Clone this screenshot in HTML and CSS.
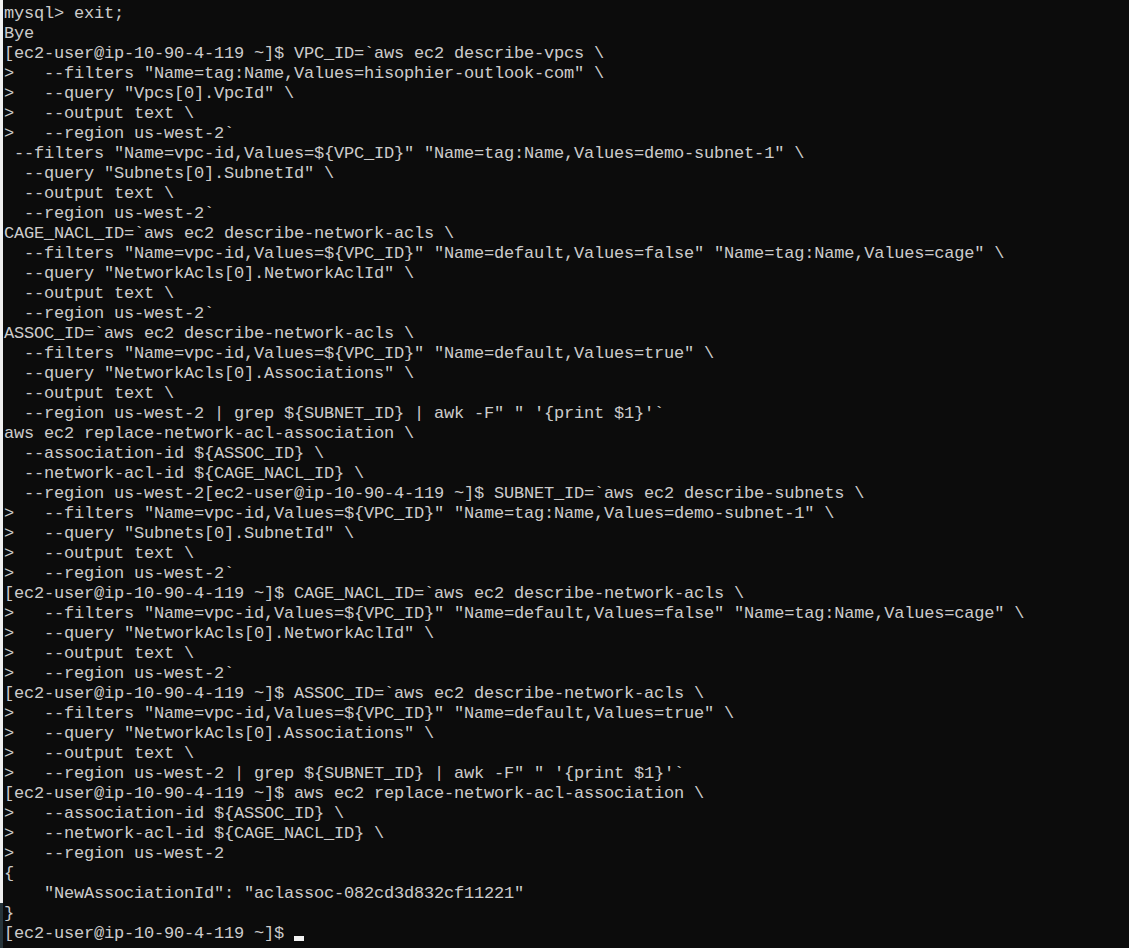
FILE: index.html
```html
<!DOCTYPE html>
<html>
<head>
<meta charset="utf-8">
<title>Terminal</title>
<link rel="stylesheet" href="styles.css">
</head>
<body>
<div class="window">
  <div class="edge"><div class="edge-top"></div><div class="edge-bottom"></div></div>
<pre class="term">mysql&gt; exit;
Bye
[ec2-user@ip-10-90-4-119 ~]$ VPC_ID=`aws ec2 describe-vpcs \
&gt;   --filters "Name=tag:Name,Values=hisophier-outlook-com" \
&gt;   --query "Vpcs[0].VpcId" \
&gt;   --output text \
&gt;   --region us-west-2`
 --filters "Name=vpc-id,Values=${VPC_ID}" "Name=tag:Name,Values=demo-subnet-1" \
  --query "Subnets[0].SubnetId" \
  --output text \
  --region us-west-2`
CAGE_NACL_ID=`aws ec2 describe-network-acls \
  --filters "Name=vpc-id,Values=${VPC_ID}" "Name=default,Values=false" "Name=tag:Name,Values=cage" \
  --query "NetworkAcls[0].NetworkAclId" \
  --output text \
  --region us-west-2`
ASSOC_ID=`aws ec2 describe-network-acls \
  --filters "Name=vpc-id,Values=${VPC_ID}" "Name=default,Values=true" \
  --query "NetworkAcls[0].Associations" \
  --output text \
  --region us-west-2 | grep ${SUBNET_ID} | awk -F" " '{print $1}'`
aws ec2 replace-network-acl-association \
  --association-id ${ASSOC_ID} \
  --network-acl-id ${CAGE_NACL_ID} \
  --region us-west-2[ec2-user@ip-10-90-4-119 ~]$ SUBNET_ID=`aws ec2 describe-subnets \
&gt;   --filters "Name=vpc-id,Values=${VPC_ID}" "Name=tag:Name,Values=demo-subnet-1" \
&gt;   --query "Subnets[0].SubnetId" \
&gt;   --output text \
&gt;   --region us-west-2`
[ec2-user@ip-10-90-4-119 ~]$ CAGE_NACL_ID=`aws ec2 describe-network-acls \
&gt;   --filters "Name=vpc-id,Values=${VPC_ID}" "Name=default,Values=false" "Name=tag:Name,Values=cage" \
&gt;   --query "NetworkAcls[0].NetworkAclId" \
&gt;   --output text \
&gt;   --region us-west-2`
[ec2-user@ip-10-90-4-119 ~]$ ASSOC_ID=`aws ec2 describe-network-acls \
&gt;   --filters "Name=vpc-id,Values=${VPC_ID}" "Name=default,Values=true" \
&gt;   --query "NetworkAcls[0].Associations" \
&gt;   --output text \
&gt;   --region us-west-2 | grep ${SUBNET_ID} | awk -F" " '{print $1}'`
[ec2-user@ip-10-90-4-119 ~]$ aws ec2 replace-network-acl-association \
&gt;   --association-id ${ASSOC_ID} \
&gt;   --network-acl-id ${CAGE_NACL_ID} \
&gt;   --region us-west-2
{
    "NewAssociationId": "aclassoc-082cd3d832cf11221"
}
[ec2-user@ip-10-90-4-119 ~]$ <span class="cursor"></span></pre>
</div>
</body>
</html>
```

FILE: styles.css
```css
html, body {
  margin: 0;
  padding: 0;
  background: #0c0c0c;
}

.window {
  display: flex;
  width: 1129px;
  height: 948px;
  overflow: hidden;
  background: #0c0c0c;
}

.edge {
  width: 3px;
  flex: 0 0 3px;
  display: flex;
  flex-direction: column;
}

.edge-top {
  flex: 1;
  background: #f0f0f0;
}

.edge-bottom {
  height: 45px;
  background: #26343a;
}

.term {
  margin: 0;
  padding: 4px 0 0 1px;
  font-family: "Liberation Mono", "DejaVu Sans Mono", monospace;
  font-size: 17px;
  letter-spacing: -0.2px;
  line-height: 20px;
  color: #cccccc;
  white-space: pre;
}

.cursor {
  display: inline-block;
  width: 10px;
  height: 5px;
  background: #f2f2f2;
  vertical-align: -3px;
}
```
